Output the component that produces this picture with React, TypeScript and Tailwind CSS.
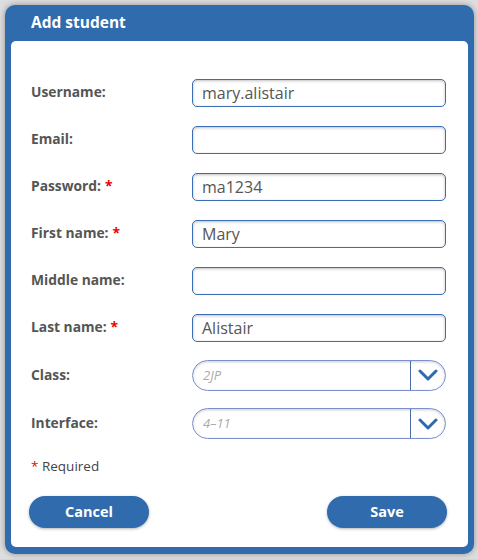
import React from "react";

const fields = [
    { label: "Username:", value: "mary.alistair" },
    { label: "Email:", value: "" },
    { label: "Password:", value: "ma1234", required: true },
    { label: "First name:", value: "Mary", required: true },
    { label: "Middle name:", value: "" },
    { label: "Last name:", value: "Alistair", required: true },
];

const selects = [
    { label: "Class:", value: "2JP" },
    { label: "Interface:", value: "4–11" },
];

function Chevron() {
    return (
        <svg width="20" height="12" viewBox="0 0 20 12" fill="none">
            <path d="M2 2 L10 10 L18 2" stroke="#2f6aae" strokeWidth="3" strokeLinecap="round" strokeLinejoin="round" />
        </svg>
    );
}

export default function App() {
    return (
        <div className="w-[478px] h-[559px] bg-[#dedede] p-[5px] font-['Open_Sans',sans-serif] overflow-hidden">
            <div className="w-[469px] h-[549px] bg-[#306bae] rounded-[10px] shadow-[0_0_6px_rgba(0,0,0,0.35)] flex flex-col px-[6px] pb-[7px]">
                {/* Header */}
                <div className="h-[36px] flex items-center pl-[20px] text-white font-bold text-[15.5px]">
                    Add student
                </div>

                {/* Body */}
                <div className="flex-1 bg-white rounded-[5px] pl-[20px] pr-[21px] pt-[28px] flex flex-col">
                    {fields.map((f) => (
                        <div key={f.label} className="h-[47px] flex items-center">
                            <div className="w-[161px] shrink-0 text-[13.8px] font-bold text-[#555]">
                                {f.label}
                                {f.required && <span className="text-[#e00] ml-1">*</span>}
                            </div>
                            <div className="w-[254px] shrink-0 h-[28px] border border-[#3a6db3] rounded-[5px] shadow-[inset_0_1px_3px_rgba(0,0,0,0.25)] flex items-center px-[9px] text-[16px] text-[#555]">
                                {f.value}
                            </div>
                        </div>
                    ))}
                    {selects.map((s) => (
                        <div key={s.label} className="h-[48.5px] flex items-center">
                            <div className="w-[161px] shrink-0 text-[13.8px] font-bold text-[#555]">{s.label}</div>
                            <div className="w-[254px] shrink-0 h-[31px] border border-[#7d8fcc] rounded-full shadow-[inset_0_1px_3px_rgba(0,0,0,0.2)] flex items-center">
                                <div className="flex-1 pl-[10px] text-[13px] italic text-[#aaa]">{s.value}</div>
                                <div className="w-[35px] h-full border-l border-[#4a6aa8] flex items-center justify-center">
                                    <Chevron />
                                </div>
                            </div>
                        </div>
                    ))}
                    <div className="mt-[8px] text-[13.5px] text-[#444]">
                        <span className="text-[#e00]">*</span> Required
                    </div>
                    <div className="mt-[20px] -ml-[2px] flex justify-between items-center">
                        <button className="w-[120px] h-[32px] rounded-full bg-[#306bae] text-white font-bold text-[14.5px] shadow-[0_1px_3px_rgba(0,0,0,0.3)]">
                            Cancel
                        </button>
                        <button className="w-[120px] h-[32px] rounded-full bg-[#306bae] text-white font-bold text-[14.5px] shadow-[0_1px_3px_rgba(0,0,0,0.3)]">
                            Save
                        </button>
                    </div>
                </div>
            </div>
        </div>
    );
}
